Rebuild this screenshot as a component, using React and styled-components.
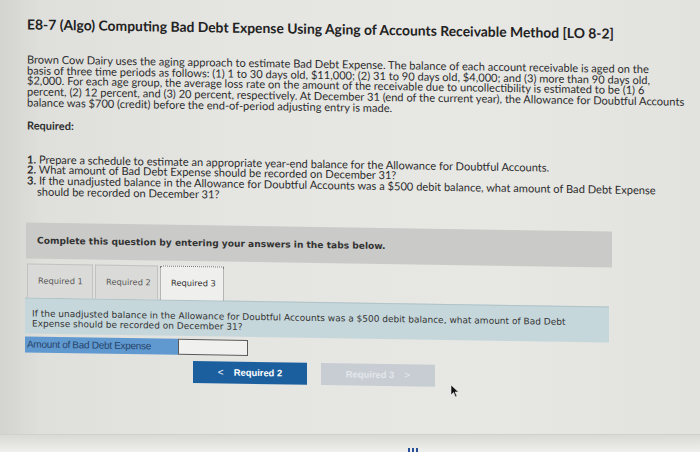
import React from "react";
import styled, { createGlobalStyle } from "styled-components";

const GlobalStyle = createGlobalStyle`
  html, body {
    margin: 0;
    padding: 0;
  }
  body {
    width: 700px;
    height: 452px;
    overflow: hidden;
    background: linear-gradient(90deg, #d3d3d0 0%, #dfdfdc 6%, #e5e5e2 35%, #e7e7e4 70%, #e2e2df 100%);
    font-family: Lato, "Open Sans", sans-serif;
    color: #2a2a2a;
  }
`;

const Screen = styled.div`
  position: relative;
  width: 700px;
  height: 452px;
  overflow: hidden;
`;

// the photo is taken slightly askew, so the sheet leans a little
const Sheet = styled.div`
  padding: 15px 0 0 27px;
  transform: skewY(0.9deg);
  transform-origin: 0 0;
`;

const Title = styled.h1`
  margin: 0;
  font-size: 13.9px;
  line-height: 17px;
  font-weight: 700;
  color: #222;
`;

const Para = styled.p`
  margin: 22px 0 0;
  font-size: 11.1px;
  line-height: 10.7px;
  color: #2e2e2e;
  span {
    display: block;
  }
`;

const Label = styled.div`
  margin-top: 10px;
  font-size: 11px;
  line-height: 13px;
  font-weight: 700;
  color: #2e2e2e;
`;

const List = styled.ol`
  margin: 23px 0 0;
  padding: 0;
  list-style: none;
  font-size: 11.1px;
  line-height: 10.8px;
  color: #2e2e2e;
`;

const Item = styled.li`
  padding-left: 10px;
  text-indent: -10px;
  b {
    font-weight: 700;
  }
`;

const Banner = styled.div`
  margin: 25px 0 0 -1px;
  width: 586px;
  height: 36px;
  background: #cacac8;
  display: flex;
  align-items: center;
  padding-left: 11px;
  box-sizing: border-box;
  font-family: "DejaVu Sans", Verdana, sans-serif;
  font-size: 9.1px;
  font-weight: 700;
  color: #333;
`;

const Tabs = styled.div`
  display: flex;
  margin-top: 5px;
  gap: 2px;
`;

const Tab = styled.div`
  width: ${({ $w }) => $w}px;
  height: 34px;
  box-sizing: border-box;
  display: flex;
  align-items: center;
  padding-left: 10px;
  background: ${({ $active }) => ($active ? "#efefed" : "#dadad8")};
  border: 1px ${({ $active }) => ($active ? "dotted #7c7c7c" : "solid #c2c2c0")};
  border-bottom: none;
  font-family: "DejaVu Sans", Verdana, sans-serif;
  font-size: 8.3px;
  color: ${({ $active }) => ($active ? "#333" : "#5a5a5a")};
`;

const Question = styled.div`
  margin-left: -2px;
  width: 584px;
  height: 36px;
  box-sizing: border-box;
  padding: 10px 0 0 7px;
  background: #c6d7dc;
  border-top: 1px solid #b1c3c7;
  font-family: "DejaVu Sans", Verdana, sans-serif;
  font-size: 9px;
  line-height: 10.2px;
  color: #333;
`;

const AnswerRow = styled.div`
  display: flex;
  margin: 3px 0 0 -2px;
  height: 16px;
`;

const AnswerLabel = styled.div`
  width: 153px;
  background: #6098d0;
  font-family: "Liberation Sans", Arial, sans-serif;
  font-size: 10px;
  color: #26456a;
  display: flex;
  align-items: center;
  padding-left: 2px;
  box-sizing: border-box;
  letter-spacing: -0.3px;
`;

const AnswerInput = styled.div`
  width: 70px;
  background: #f0f0ee;
  border: 1.5px solid #5a5a5a;
  box-sizing: border-box;
`;

const Buttons = styled.div`
  display: flex;
  gap: 14px;
  margin: 6px 0 0 166px;
`;

const NavButton = styled.div`
  width: 114px;
  height: 22px;
  display: flex;
  align-items: center;
  justify-content: center;
  gap: 10px;
  background: ${({ $disabled }) => ($disabled ? "#c8cdd3" : "#1b5f9f")};
  color: ${({ $disabled }) => ($disabled ? "#e3e7eb" : "#fff")};
  font-family: "Liberation Sans", Arial, sans-serif;
  font-size: 9.4px;
  font-weight: 700;
`;

const Chevron = styled.span`
  font-size: 10px;
  font-weight: 400;
`;

const Cursor = styled.svg`
  position: absolute;
  left: 450px;
  top: 384px;
`;

const BottomBar = styled.div`
  position: absolute;
  left: 0;
  right: 0;
  top: 434px;
  height: 18px;
  border-top: 1px solid #d0d0cd;
  background: linear-gradient(180deg, #d9d9d6, #e6e6e3 55%, #f1f1f0 100%);
`;

const Grid = styled.div`
  position: absolute;
  left: 408px;
  top: 448px;
  width: 11px;
  height: 4px;
  background: repeating-linear-gradient(90deg, #2a4f9a 0 2px, transparent 2px 4px);
`;

export default function App() {
  return (
    <>
      <GlobalStyle />
      <Screen>
        <Sheet>
          <Title>
            E8-7 (Algo) Computing Bad Debt Expense Using Aging of Accounts Receivable Method [LO 8-2]
          </Title>
          <Para>
            <span>
              Brown Cow Dairy uses the aging approach to estimate Bad Debt Expense. The balance of each account receivable is aged on the
            </span>
            <span>
              basis of three time periods as follows: (1) 1 to 30 days old, $11,000; (2) 31 to 90 days old, $4,000; and (3) more than 90 days old,
            </span>
            <span>
              $2,000. For each age group, the average loss rate on the amount of the receivable due to uncollectibility is estimated to be (1) 6
            </span>
            <span>
              percent, (2) 12 percent, and (3) 20 percent, respectively. At December 31 (end of the current year), the Allowance for Doubtful Accounts
            </span>
            <span>balance was $700 (credit) before the end-of-period adjusting entry is made.</span>
          </Para>
          <Label>Required:</Label>
          <List>
            <Item>
              <b>1.</b> Prepare a schedule to estimate an appropriate year-end balance for the Allowance for Doubtful Accounts.
            </Item>
            <Item>
              <b>2.</b> What amount of Bad Debt Expense should be recorded on December 31?
            </Item>
            <Item>
              <b>3.</b> If the unadjusted balance in the Allowance for Doubtful Accounts was a $500 debit balance, what amount of Bad Debt Expense
              <br />
              should be recorded on December 31?
            </Item>
          </List>
          <Banner>Complete this question by entering your answers in the tabs below.</Banner>
          <Tabs>
            <Tab $w={66}>Required 1</Tab>
            <Tab $w={63}>Required 2</Tab>
            <Tab $w={64} $active>
              Required 3
            </Tab>
          </Tabs>
          <Question>
            If the unadjusted balance in the Allowance for Doubtful Accounts was a $500 debit balance, what amount of Bad Debt
            <br />
            Expense should be recorded on December 31?
          </Question>
          <AnswerRow>
            <AnswerLabel>Amount of Bad Debt Expense</AnswerLabel>
            <AnswerInput />
          </AnswerRow>
          <Buttons>
            <NavButton>
              <Chevron>&lt;</Chevron>
              Required 2
            </NavButton>
            <NavButton $disabled>
              Required 3<Chevron>&gt;</Chevron>
            </NavButton>
          </Buttons>
        </Sheet>
        <Cursor width="10" height="14" viewBox="0 0 10 14">
          <path d="M1 1 L1 11 L3.5 8.5 L5.5 13 L7 12.3 L5 8 L8.5 8 Z" fill="#111" stroke="#eee" strokeWidth="0.6" />
        </Cursor>
        <BottomBar />
        <Grid />
      </Screen>
    </>
  );
}
